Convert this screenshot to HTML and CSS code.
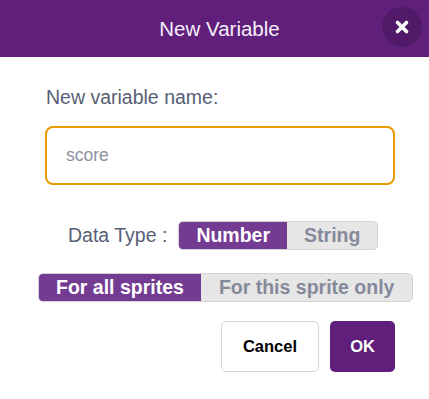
FILE: index.html
```html
<!DOCTYPE html>
<html lang="en">
<head>
  <meta charset="UTF-8">
  <title>New Variable</title>
  <link rel="stylesheet" href="styles.css">
</head>
<body>
  <div class="dialog">
    <div class="header">
      <h1 class="title">New Variable</h1>
      <button class="close" aria-label="Close">
        <svg width="16" height="16" viewBox="0 0 16 16">
          <path d="M3.5 3.5 L12.5 12.5 M12.5 3.5 L3.5 12.5" stroke="#fff" stroke-width="3.6" stroke-linecap="round" fill="none"/>
        </svg>
      </button>
    </div>

    <div class="body">
      <label class="name-label" for="varname">New variable name:</label>
      <input class="name-input" id="varname" type="text" placeholder="score">

      <div class="type-row">
        <span class="type-label">Data Type :</span>
        <div class="toggle">
          <span class="seg seg-on">Number</span>
          <span class="seg">String</span>
        </div>
      </div>

      <div class="scope-row">
        <div class="toggle">
          <span class="seg seg-on">For all sprites</span>
          <span class="seg seg-wide">For this sprite only</span>
        </div>
      </div>

      <div class="actions">
        <button class="btn btn-cancel">Cancel</button>
        <button class="btn btn-ok">OK</button>
      </div>
    </div>
  </div>
</body>
</html>
```

FILE: styles.css
```css
body {
  margin: 0;
  font-family: "Liberation Sans", Arial, sans-serif;
  background: #fff;
}
.dialog {
  width: 429px;
  height: 399px;
  background: #fff;
  overflow: hidden;
}
.header {
  position: relative;
  height: 57px;
  background-color: #5f1f7b;
  display: flex;
  align-items: center;
  justify-content: center;
}
.title {
  margin: 0;
  padding-left: 10px;
  font-size: 20.5px;
  font-weight: normal;
  color: #f6f0fa;
}
.close {
  position: absolute;
  top: 7px;
  right: 7px;
  width: 40px;
  height: 40px;
  border: none;
  border-radius: 50%;
  background: rgba(0, 0, 0, 0.15);
  display: flex;
  align-items: center;
  justify-content: center;
  padding: 0;
  cursor: pointer;
}
.body {
  padding: 28px 34px 0 45px;
}
.name-label {
  display: block;
  font-size: 19.5px;
  color: #575e75;
  line-height: 24px;
  margin-left: 1px;
}
.name-input {
  display: block;
  box-sizing: border-box;
  width: 350px;
  height: 59px;
  margin-top: 17px;
  padding: 0 0 0 19px;
  border: 2px solid #e89a00;
  border-radius: 8px;
  font-family: inherit;
  font-size: 17.5px;
  color: #575e75;
  outline: none;
}
.name-input::placeholder {
  color: #8d909f;
}
.type-row {
  display: flex;
  align-items: center;
  gap: 11px;
  margin-top: 36px;
  margin-left: 23px;
}
.type-label {
  font-size: 19.5px;
  color: #575e75;
}
.toggle {
  display: flex;
  flex: none;
  height: 29px;
  border-radius: 5px;
  overflow: hidden;
  border: 1px solid #d3d3d3;
  box-sizing: border-box;
  background: #e6e6e6;
  white-space: nowrap;
}
.seg {
  display: flex;
  align-items: center;
  padding: 0 17px;
  font-size: 19.5px;
  font-weight: bold;
  color: #858a9b;
}
.seg-wide {
  padding: 0 18px;
}
.seg-on {
  background: #743b92;
  color: #fff;
  padding: 0 17px 0 18px;
  margin: -1px 0 -1px -1px;
}
.scope-row {
  display: flex;
  margin-top: 23px;
  margin-left: -7px;
  margin-right: -30px;
}
.actions {
  display: flex;
  justify-content: flex-end;
  gap: 11px;
  margin-top: 19px;
}
.btn {
  height: 51px;
  border-radius: 5px;
  font-family: inherit;
  font-size: 16.5px;
  font-weight: bold;
  cursor: pointer;
}
.btn-cancel {
  width: 98px;
  background: #fff;
  border: 1px solid #d6d6d6;
  color: #000;
}
.btn-ok {
  width: 65px;
  background: #5f1f7b;
  border: none;
  color: #fff;
}
```
